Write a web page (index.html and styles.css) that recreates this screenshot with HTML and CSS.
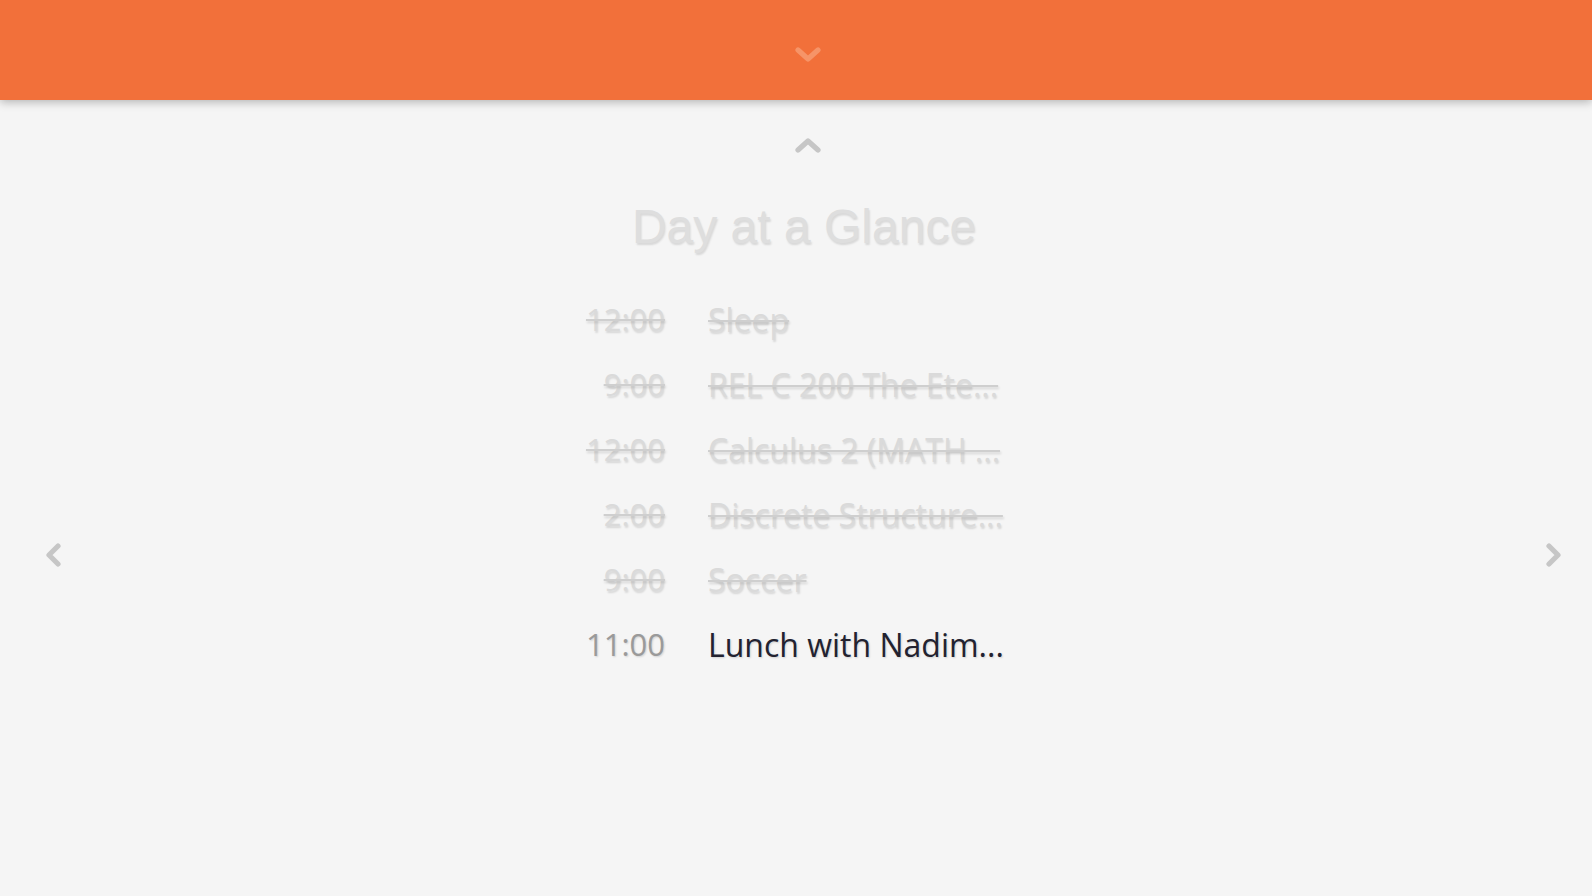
FILE: index.html
```html
<!DOCTYPE html>
<html lang="en">
<head>
<meta charset="utf-8">
<title>Day at a Glance</title>
<link rel="stylesheet" href="styles.css">
</head>
<body>
  <header class="topbar">
    <svg class="chev chev-down" viewBox="0 0 26 16" width="26" height="16"><path d="M3 3 L13 12 L23 3" /></svg>
  </header>
  <main class="stage">
    <nav class="side side-left">
      <svg class="chev chev-side" viewBox="0 0 18 24" width="18" height="24"><path d="M14 3 L5 12 L14 21" /></svg>
    </nav>
    <section class="glance">
      <svg class="chev chev-up" viewBox="0 0 26 16" width="26" height="16"><path d="M3 13 L13 4 L23 13" /></svg>
      <h1 class="glance-title">Day at a Glance</h1>
      <ul class="agenda">
        <li class="item done"><span class="time">12:00</span><span class="what">Sleep</span></li>
        <li class="item done"><span class="time">9:00</span><span class="what">REL C 200 The Ete...</span></li>
        <li class="item done"><span class="time">12:00</span><span class="what">Calculus 2 (MATH ...</span></li>
        <li class="item done"><span class="time">2:00</span><span class="what">Discrete Structure...</span></li>
        <li class="item done"><span class="time">9:00</span><span class="what">Soccer</span></li>
        <li class="item"><span class="time">11:00</span><span class="what">Lunch with Nadim...</span></li>
      </ul>
    </section>
    <nav class="side side-right">
      <svg class="chev chev-side" viewBox="0 0 18 24" width="18" height="24"><path d="M4 3 L13 12 L4 21" /></svg>
    </nav>
  </main>
</body>
</html>
```
FILE: styles.css
```css
html, body {
  margin: 0;
  padding: 0;
  height: 100%;
  overflow: hidden;
}
body {
  background: #f5f5f5;
  font-family: "Open Sans", "Liberation Sans", sans-serif;
}
.topbar {
  position: relative;
  z-index: 2;
  height: 100px;
  background: #f2703a;
  box-shadow: 0 2px 9px rgba(0, 0, 0, 0.28);
  display: flex;
  justify-content: center;
  padding-left: 24px;
  box-sizing: border-box;
}
.chev {
  display: block;
  fill: none;
  stroke-width: 5.2;
  stroke-linecap: round;
  stroke-linejoin: round;
}
.chev-down {
  margin-top: 47px;
  stroke: #f69468;
}
.stage {
  display: flex;
}
.side {
  display: flex;
  justify-content: center;
  padding-top: 443px;
}
.side-left {
  width: 106px;
}
.side-right {
  width: 76px;
  padding-left: 6px;
}
.chev-side {
  stroke: #c6c6c6;
}
.glance {
  flex: 1;
  display: flex;
  flex-direction: column;
  align-items: center;
}
.chev-up {
  margin-top: 37px;
  stroke: #c6c6c6;
}
.glance-title {
  margin: 46px 0 0;
  font-family: "Liberation Sans", Arial, sans-serif;
  font-weight: normal;
  font-size: 48px;
  line-height: 55px;
  color: #dedede;
  text-shadow: 1px 2px 2px rgba(0, 0, 0, 0.12);
  padding-right: 8px;
}
.agenda {
  list-style: none;
  margin: 33px 33px 0 0;
  padding: 0;
  display: grid;
  grid-template-columns: 100px 310px;
  column-gap: 43px;
}
.item {
  display: contents;
}
.time, .what {
  line-height: 65px;
  white-space: nowrap;
}
.time {
  font-size: 31px;
  text-align: right;
  color: #9a9a9a;
  text-shadow: 1px 1px 2px rgba(0, 0, 0, 0.15);
}
.what {
  font-size: 32px;
  color: #222230;
  text-shadow: 1px 1px 2px rgba(0, 0, 0, 0.15);
}
.done .time, .done .what {
  color: #dadada;
  text-decoration: line-through;
  text-decoration-color: #cfcfcf;
  text-decoration-thickness: 2px;
  text-shadow: 1px 2px 2px rgba(0, 0, 0, 0.13);
}
```
